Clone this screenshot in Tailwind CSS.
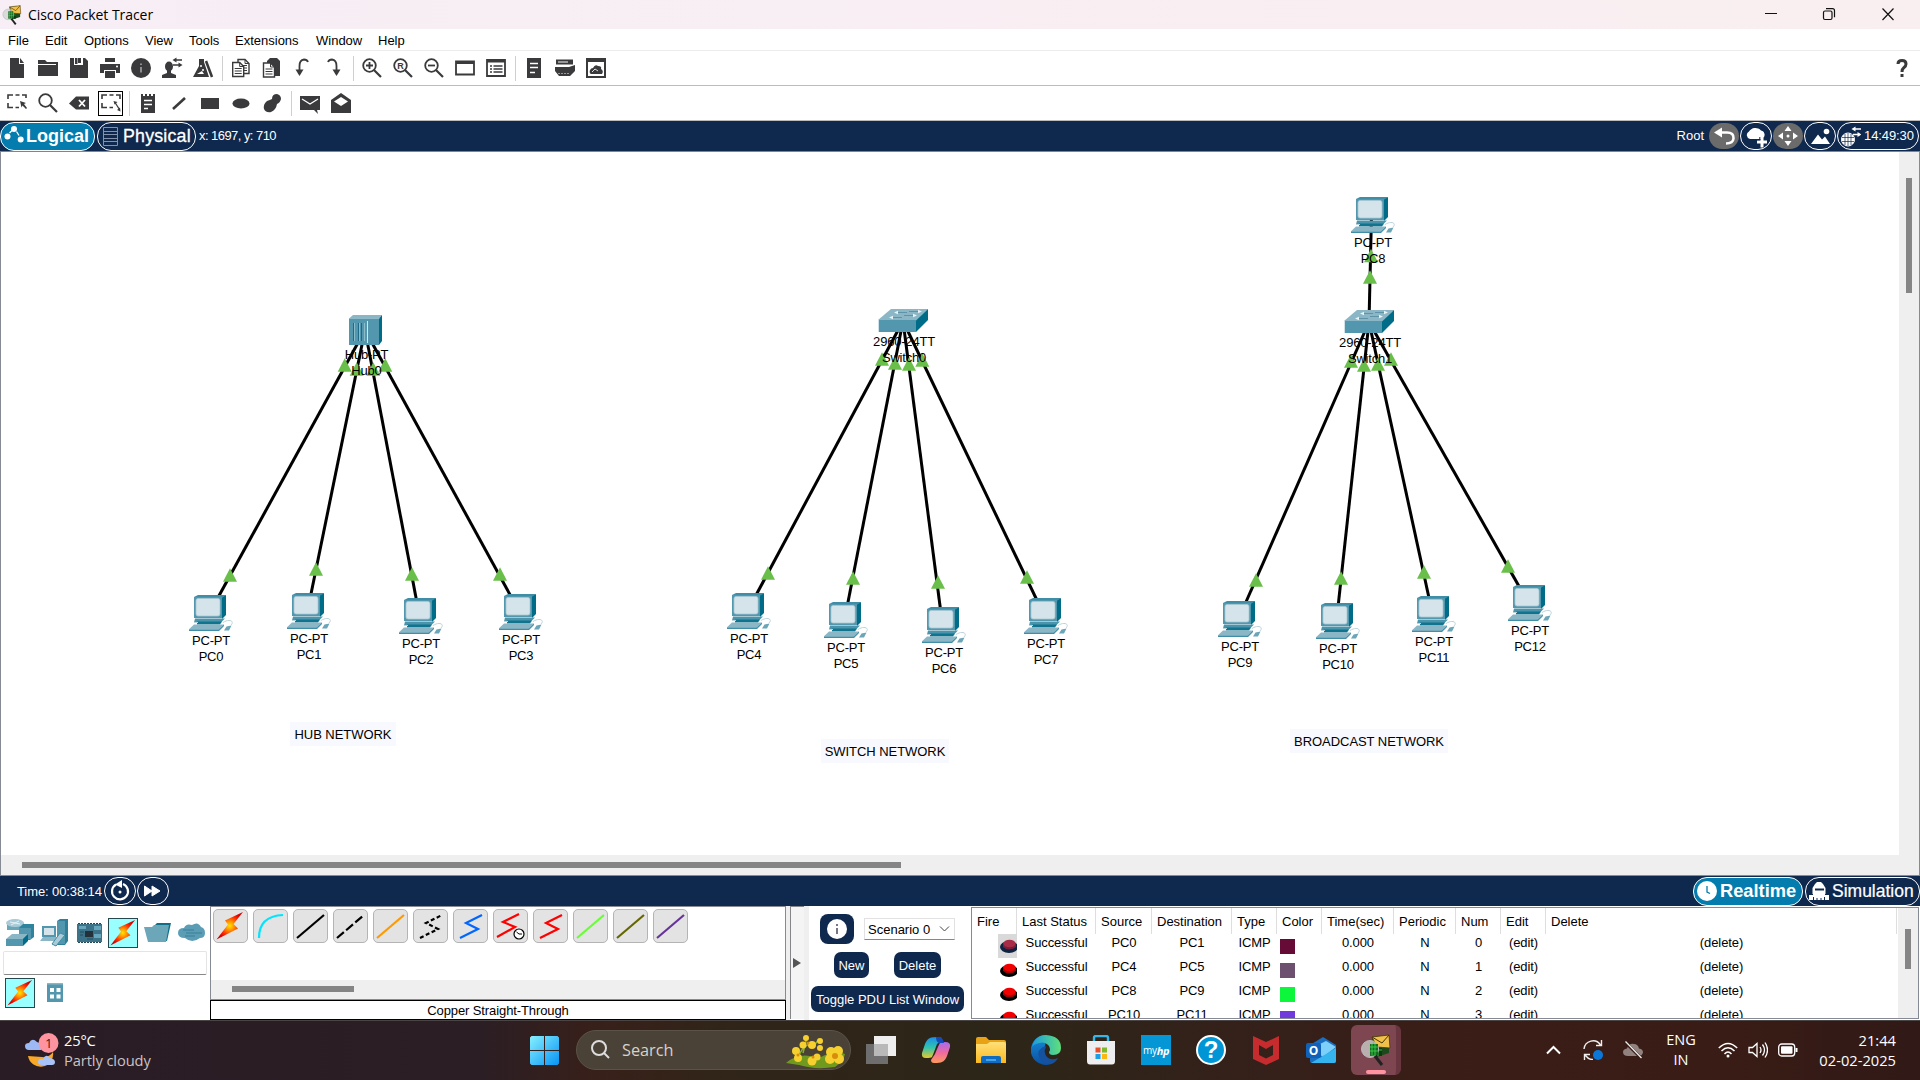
<!DOCTYPE html>
<html lang="en">
<head>
<meta charset="utf-8">
<title>Cisco Packet Tracer</title>
<script src="https://cdn.jsdelivr.net/npm/@tailwindcss/browser@4"></script>
</head>
<body class="w-[1920px] h-[1080px] overflow-hidden bg-white text-black text-[13px] leading-4 font-['Liberation_Sans',Arial,sans-serif] flex flex-col">

<svg class="absolute w-0 h-0">
  <defs>
    <radialGradient id="spark"><stop offset="0" stop-color="#ffe500"/><stop offset=".3" stop-color="#ff9a00"/><stop offset=".7" stop-color="#ff2a00"/><stop offset="1" stop-color="#d80000"/></radialGradient>
    <linearGradient id="win" x1="0" y1="0" x2="1" y2="1"><stop offset="0" stop-color="#86f0ff"/><stop offset="1" stop-color="#0893f5"/></linearGradient>
    <linearGradient id="cpA" x1="0" y1="0" x2="0" y2="1"><stop offset="0" stop-color="#1a8fe8"/><stop offset=".5" stop-color="#2fc3b0"/><stop offset="1" stop-color="#e9c92c"/></linearGradient>
    <linearGradient id="cpB" x1="0" y1="0" x2="0" y2="1"><stop offset="0" stop-color="#a56af0"/><stop offset=".5" stop-color="#ee6aa0"/><stop offset="1" stop-color="#ff9a5a"/></linearGradient>
    <linearGradient id="edA" x1="0" y1="0" x2="1" y2="0"><stop offset="0" stop-color="#1c9bdf"/><stop offset="1" stop-color="#5fe07a"/></linearGradient>
    <linearGradient id="edB" x1="0" y1="0" x2="0" y2="1"><stop offset="0" stop-color="#1590dd"/><stop offset="1" stop-color="#0c4fa0"/></linearGradient>
    <linearGradient id="fold" x1="0" y1="0" x2="0" y2="1"><stop offset="0" stop-color="#ffe07a"/><stop offset="1" stop-color="#fbb91c"/></linearGradient>
    <symbol id="pc" viewBox="0 0 44 36">
      <path d="M5 2 9 0H37L33 3H5Z" fill="#3f8da6"/>
      <path d="M33 2.500 37 0V20L33 24Z" fill="#006c87"/>
      <path d="M5 2H33V23H5Z" fill="#5297ad"/>
      <rect x="7" y="3.500" width="24" height="17.500" rx="2" fill="#d4e4ea" stroke="#a9c6d1" stroke-width=".8"/>
      <path d="M6 23.500H36L32 27.500H5Z" fill="#4b94ab"/><path d="M8 26.500H33L31 29.500H8Z" fill="#10748e"/>
      <path d="M5 27H9V28H5Z" fill="#bcd5dd"/>
      <path d="M5 29.500H35L30 34.500V36H0V34.300Z" fill="#8bb6c6"/><path d="M35 29.500V31L30 36H0V34.800H29.500Z" fill="#3f8da6"/>
      <path d="M37.500 31.500 42.500 30.500 40 35.500H35Z" fill="#6aa5b8"/><path d="M34 27.500C40 23.500 46 26 42 30" stroke="#bcd3dc" fill="none"/>
    </symbol>
    <symbol id="hub" viewBox="0 0 33 30">
      <path d="M0 3.500 4 0H33L30 3.500Z" fill="#8bb6c6"/><path d="M30 3.500 33 0V26L30 30Z" fill="#006c87"/><path d="M0 3.500H30V30H0Z" fill="#5297ad"/>
      <path d="M4.500 8V26M9.500 8V26M12.500 8V26" stroke="#1f6a86"/><path d="M5.500 8V26M10.500 8V26M15.500 8V26" stroke="#9ac3d2" stroke-width=".8"/><path d="M18.500 6V28" stroke="#d4e8ef"/>
    </symbol>
    <symbol id="switch" viewBox="0 0 50 23">
      <path d="M0 11 13 0H50L38 12Z" fill="#8bb6c6"/><path d="M38 11.500 50 0V11L38 23Z" fill="#006c87"/><path d="M0 11H38V23H0Z" fill="#5297ad"/><path d="M.5 11V23" stroke="#cfe2ea"/>
      <path d="M17 3.500H29M12 8.500H24" stroke="#5e93a8"/><path d="M31 2.500H42M26 6.500H37" stroke="#5e93a8"/><path d="m16 3.500 4-1.800v3.600ZM11 8.500l4-1.800v3.600ZM44 2.500l-4-1.800v3.600ZM39 6.500l-4-1.800v3.600Z" fill="#e9f4f8"/>
    </symbol>
    <symbol id="bolt" viewBox="0 0 30 30"><path d="M28 1 10 9.500 13 13.500 1.500 28.500 23 17.500 18.500 13Z" fill="url(#spark)"/></symbol>
    <symbol id="pt" viewBox="0 0 32 32">
      <path d="M12 3 29 1V19L14 24Z" fill="#1d4a1a"/><path d="M13 8H22V22H13Z" fill="#0c3a10"/><path d="M15 8V22M18 8V22M13 12H22M13 16H22" stroke="#2ec23c"/>
      <path d="M12 3 29 1 30 14 17 13Z" fill="#f0c04a" stroke="#4d3500" stroke-width=".8"/><path d="M12 3 22 9 29 1" fill="none" stroke="#4d3500"/>
      <circle cx="10" cy="15" r="8.500" fill="#cfd3cf" fill-opacity=".75" stroke="#b9bdb9"/><path d="M10 10H18V21L10 22Z" fill="#176a22"/><path d="M12 10V21M15 10V21M10 13H18M10 17H18" stroke="#3ddc4e" stroke-width=".8"/>
      <path d="M15 22 22 31" stroke="#222" stroke-width="3"/>
    </symbol>
  </defs>
</svg>

<header class="h-[29px] shrink-0 flex items-center bg-linear-to-r from-[#f7eef6] to-[#f9eff0] pl-[2px] font-['Open_Sans','Noto_Sans',sans-serif]">
  <svg class="w-5 h-6"><use href="#pt" width="20" height="24"/></svg>
  <span class="ml-1.5 text-[14px] tracking-[-0.05px] grow">Cisco Packet Tracer</span>
  <svg class="w-[156px] h-[29px]" viewBox="1764 0 156 29" fill="none" stroke="#111" stroke-width="1.200"><path d="M1765 13.500h12M1882.500 8.500l11 11.500M1893.500 8.500l-11 11.500"/><rect x="1823.500" y="11" width="8.500" height="8.500" rx="1.500"/><path d="M1826 8.700h6.500q2 0 2 2v6.500"/></svg>
</header>

<nav class="h-[22px] shrink-0 border-b border-[#ececec] flex items-center pt-[3px]" id="menu"></nav>

<div class="h-[35px] shrink-0 border-b border-[#bcbcbc] flex items-center pl-[7px] pr-[11px]" id="bar1"></div>
<div class="h-[35px] shrink-0 border-b border-[#bcbcbc] flex items-center pl-[7px]" id="bar2"></div>

<div class="h-[31px] shrink-0 bg-[#0f284d] border-b border-[#7f8590] flex items-center text-white">
  <div class="w-[95px] h-[29px] rounded-[14px] border border-white bg-[#047cad] flex items-center pl-[3px]">
    <svg class="w-5 h-5" fill="#fff"><path d="M5.500 7 8 4.500M12.500 5.500 15 9.500" fill="none" stroke="#fff" stroke-width="1.300"/><circle cx="3.500" cy="10.500" r="3"/><circle cx="10" cy="3" r="3"/><circle cx="16.700" cy="13.500" r="3"/></svg>
    <span class="ml-[2px] text-lg font-bold">Logical</span>
  </div>
  <div class="ml-[2px] w-[99px] h-[29px] rounded-[14px] border border-white flex items-center pl-[5px]">
    <svg class="w-[15px] h-[19px]" fill="none" stroke="#8391aa"><path d="M.5.500h14v18H.500ZM.500 4.500h14M.500 7.500h14M.500 11.500h14M.500 14.500h14"/></svg>
    <span class="ml-[5px] text-[17.800px] tracking-[0.2px] [-webkit-text-stroke:0.3px_white]">Physical</span>
  </div>
  <span class="ml-[3px] grow tracking-[-0.55px]">x: 1697, y: 710</span>
  <span class="mr-[5px]">Root</span>
  <svg class="w-[30px] h-[26px] rounded-[13px] bg-[#6b6b6b]" viewBox="0 0 30 26"><path d="M5 9.500 13 4.500V14.500Z" fill="#fff"/><path d="M12 9.500H18Q25 9.500 24.500 15.500 24 20.500 17 20.500" fill="none" stroke="#fff" stroke-width="2.600"/></svg>
  <svg class="ml-[1px] w-[32px] h-7 rounded-[14px] border border-white" viewBox="0 0 30 26" fill="#fff"><path d="M9 16a4 4 0 0 1-1-7.500 7 6 0 0 1 12-1 4.500 4.500 0 0 1 1 8.500ZM19.500 14.500h3v3h3.500v3h-3.500v4h-3v-4h-3.500v-3h3.500Z"/><path d="M18.800 14v2.800h-3.500" fill="none" stroke="#0f284d"/></svg>
  <svg class="ml-[1px] w-[30px] h-[26px] rounded-[13px] bg-[#6b6b6b]" viewBox="0 0 30 26" fill="#fff"><path d="M15 3l3.500 5h-7ZM15 23l3.500-5h-7ZM5 13l5-3.500v7ZM25 13l-5-3.500v7Z"/><circle cx="15" cy="13" r="1.500"/></svg>
  <svg class="ml-[1px] w-[32px] h-7 rounded-[14px] border border-white" viewBox="0 0 30 26" fill="#fff"><path d="M6 21l7-9.500 4 5 3-3 5 7.500Z"/><circle cx="21.500" cy="8.500" r="2.800"/></svg>
  <div class="ml-[1px] mr-[1px] w-[82px] h-7 rounded-[14px] border border-white flex items-center pl-[3px]">
    <svg class="w-[20px] h-[22px]" fill="none" stroke="#fff"><circle cx="7" cy="14.500" r="6.500" fill="#fff"/><path d="M1 12.500h12M1 16.500h12M7 8v13M4 9v11M10 9v11" stroke="#0f284d" stroke-width=".7"/><path d="M12 4h8M12 9.500h7" stroke-width="1.700"/><path d="m10.500 4 4-2.500v5ZM20.500 9.500l-4-2.500v5Z" fill="#fff" stroke="none"/></svg>
    <span class="ml-[3px] tracking-[-0.1px]">14:49:30</span>
  </div>
</div>

<main class="h-[724px] shrink-0 flex flex-col border-l border-b border-r border-[#858a94]">
  <div class="h-[703px] flex">
    <div class="relative w-[1898px] h-[703px] overflow-hidden" id="canvas"></div>
    <div class="grow bg-[#efefef] pl-[7px] pt-[26px]"><div class="w-[6px] h-[115px] bg-[#858585]"></div></div>
  </div>
  <div class="grow bg-[#efefef] pl-[21px] pt-[7px]"><div class="w-[879px] h-[6px] bg-[#858585]"></div></div>
</main>

<div class="h-[30px] shrink-0 bg-[#0f284d] flex items-center text-white">
  <span class="ml-[17px] w-[87px] pt-px whitespace-nowrap tracking-[-0.1px]">Time: 00:38:14</span>
  <svg class="w-8 h-7 rounded-[14px] border border-white" viewBox="0 0 30 26"><path d="M11 6.500A8 8 0 1 0 18 6" fill="none" stroke="#fff" stroke-width="2.200"/><path d="M10 6.500 17 2v8Z" fill="#fff"/><circle cx="15" cy="14" r="1.500" fill="#fff"/></svg>
  <svg class="ml-px w-8 h-7 rounded-[14px] border border-white" viewBox="0 0 30 26" fill="#fff"><path d="M6.500 8 14 13 6.500 18ZM14 8 22 13 14 18Z" stroke="#fff"/></svg>
  <div class="grow"></div>
  <div class="w-[110px] h-[29px] rounded-[14px] border border-white bg-[#047cad] flex items-center pl-[3px]">
    <svg class="w-5 h-5"><circle cx="10" cy="10" r="10" fill="#fff"/><path d="M10 5v6l3 1.500" fill="none" stroke="#047cad" stroke-width="1.300"/></svg>
    <span class="ml-[3px] text-[18.300px] font-bold">Realtime</span>
  </div>
  <div class="ml-[2px] w-[115px] h-[29px] rounded-[14px] border border-white flex items-center pl-[3px]">
    <svg class="w-5 h-5" fill="#fff"><path d="M6 3 8 1h4l2 2 2.500 4v6H3.500V7ZM0 14h4v-2h12v2h4v5H0Z"/><path d="M6 8.500h9" stroke="#0f284d" stroke-width="2"/><path d="M4.500 16v3M8 17v2M12 17v2M15.500 16v3" stroke="#0f284d"/></svg>
    <span class="ml-[3px] text-[17.500px] [-webkit-text-stroke:0.2px_white]">Simulation</span>
  </div>
</div>

<section class="h-[114px] shrink-0 flex">
  <div class="w-[210px] flex flex-col">
    <div class="h-[45px] pl-[5px] pt-3 flex items-start gap-[5px]">
      <svg class="w-[30px] h-[30px]"><path d="M2 5Q9-2 19 5V12H2Z" fill="#6aa5b8"/><ellipse cx="10" cy="5" rx="9" ry="4" fill="#a9cbd7"/><path d="M14 10 18 6H29V19L25 22H14Z" fill="#2f849d"/><path d="M14 10H26V21H14Z" fill="#5297ad"/><path d="M1 21 7 16H23L18 21Z" fill="#8bb6c6"/><path d="M1 21H18V28H1Z" fill="#5297ad"/><path d="M18 21 23 16V23L18 28Z" fill="#006c87"/><path d="M5 4 15 6M6 7 14 3" stroke="#e6f2f6"/></svg>
      <svg class="w-[30px] h-[30px]"><path d="M17 3 20 1H28V23L25 27H17Z" fill="#2f7f99"/><path d="M17 3H25V26H17Z" fill="#5297ad"/><path d="M2 8H16V19H2Z" fill="#5297ad"/><path d="M4 10H14V17H4Z" fill="#d4e4ea"/><path d="M3 19H17L14 23H0Z" fill="#8bb6c6"/><path d="M12 26 20 15 25 17 16 28Z" fill="#a9cbd7" stroke="#3f8da6"/></svg>
      <svg class="w-[30px] h-[30px]"><path d="M2 6H27V24H2Z" fill="#3d7389"/><path d="M10 13H18V19H10Z" fill="#23323a"/><path d="M4 8H11V11H4ZM19 8H26V12H19ZM19 16H26V20H19Z" fill="#65a6bd"/><path d="M3 5.500H27M3 24.500H27" stroke="#20495a" stroke-dasharray="2 1"/><path d="M5 14H9M5 17H8M12 21H18" stroke="#1f4f63"/></svg>
      <div class="w-[30px] h-[30px] -ml-[2px] bg-[#99ffff] border border-[#24484d]"><svg class="w-7 h-7"><use href="#bolt"/></svg></div>
      <svg class="w-[30px] h-[30px]"><path d="M12 7 14 5H28L24 23H8Z" fill="#0f6f88"/><path d="M1 9H9L11 7H26L23 24H5Z" fill="#6ba6b9"/></svg>
      <svg class="w-[30px] h-[30px] -ml-px"><path d="M8 20Q1 20 1 15 1 10 7 10 9 5 15 7 21 3 24 9 28 10 28 15 28 20 23 20 15 26 8 20Z" fill="#5b9db4"/><path d="M6 12H17M9 15H25M8 18H18" stroke="#3b7f97"/></svg>
    </div>
    <div class="ml-[3px] w-[204px] h-[24px] border border-[#e4e4e4] border-b-[#888] rounded-[2px]"></div>
    <div class="mt-[3px] pl-[5px] flex items-center gap-3">
      <div class="w-[30px] h-[30px] bg-[#99ffff] border border-[#24484d]"><svg class="w-7 h-7"><use href="#bolt"/></svg></div>
      <svg class="w-4 h-5"><path d="M0 1H16V19H0Z" fill="#5297ad"/><path d="M0 0H16V1.500H0Z" fill="#8bb6c6"/><path d="M3 5H7V9H3ZM9.500 5H13.500V9H9.500ZM3 11.500H7V15.500H3ZM9.500 11.500H13.500V15.500H9.500Z" fill="#fff"/></svg>
    </div>
  </div>
  <div class="w-[576px] flex flex-col">
    <div class="h-[94px] border border-[#858a94] flex flex-col">
      <div class="h-[73px] pl-[2px] pt-[2px] flex gap-[5px]" id="cables"></div>
      <div class="grow bg-[#efefef] pl-[21px] pt-[6px]"><div class="w-[122px] h-[6px] bg-[#858585]"></div></div>
    </div>
    <div class="grow border border-black flex items-center justify-center pt-px tracking-[-0.1px]">Copper Straight-Through</div>
  </div>
  <div class="w-[4px] bg-[#efefef]"></div>
  <div class="w-[14px] h-[113px] bg-[#f4f4f4] border-l border-t border-[#85858a] flex items-center"><svg class="ml-[2px] w-[9px] h-3"><path d="M0 1 8 6 0 11Z" fill="#555"/></svg></div>
  <div class="w-[5px] bg-[#efefef]"></div>
  <div class="w-[162px] pl-[2px] pt-2">
    <div class="flex items-center pl-[9px]">
      <div class="w-[34px] h-[30px] rounded-lg bg-[#0f284d] flex items-center justify-center"><svg class="w-5 h-5"><circle cx="10" cy="10" r="10" fill="#fff"/><path d="M10 5v2M10 9v6" stroke="#556" stroke-width="1.600"/></svg></div>
      <div class="ml-[10px] w-[91px] h-[22px] border border-[#e2e2e2] border-b-[#888] flex items-center pl-[3px]"><span class="w-[71px] pt-px">Scenario 0</span><svg class="w-[11px] h-2"><path d="M1 1.500 5.500 6 10 1.500" fill="none" stroke="#444"/></svg></div>
    </div>
    <div class="mt-2 ml-[23px] flex gap-[25px] text-white">
      <div class="w-[35px] h-[26px] rounded-[7px] bg-[#0f284d] flex items-center justify-center pt-px">New</div>
      <div class="w-[47px] h-[26px] rounded-[7px] bg-[#0f284d] flex items-center justify-center pt-px">Delete</div>
    </div>
    <div class="mt-2 w-[153px] h-[26px] rounded-[7px] bg-[#0f284d] text-white flex items-center justify-center pt-px whitespace-nowrap">Toggle PDU List Window</div>
  </div>
  <div class="mt-px w-[948px] h-[112px] border border-[#858a94] flex overflow-hidden">
    <div class="w-[926px]">
      <div class="h-[26px] grid grid-cols-[45px_79px_56px_80px_45px_45px_72px_62px_45px_45px_351px]" id="thead"></div>
      <div id="rows"></div>
    </div>
    <div class="grow bg-[#efefef] pl-[7px] pt-[21px]"><div class="w-[6px] h-10 bg-[#858585]"></div></div>
  </div>
</section>

<footer class="h-[60px] shrink-0 border-t border-[#4b4444] pb-px bg-[linear-gradient(90deg,#291c25_0%,#2b1e24_25%,#38201a_31%,#302518_38%,#2c2618_52%,#35201a_66%,#3a1d16_78%,#391c15_90%,#301917_100%)] text-white flex items-center font-['Open_Sans','Noto_Sans',sans-serif]">
  <div class="w-[530px] shrink-0 pl-6 pb-px flex items-center">
    <svg class="w-10 h-9"><path d="M4 18a10 10 0 0 0 25-4q-4 6-11 5Z" fill="#f8a826" transform="translate(0 6)"/><path d="M5 18Q1 18 1 14 1 11 5 11 8 5 13 10 18 11 17 18Z" fill="#9db9f5"/><path d="M18 33Q13 33 14 29 15 26 19 27 22 21 26 26 31 27 31 30 31 33 28 33Z" fill="#a9c2f8"/><circle cx="24.500" cy="11" r="10" fill="#ff939f"/><text x="21" y="16" font-size="13" fill="#3a1a20">1</text></svg>
    <div class="text-[14.700px] leading-5"><div class="tracking-[-0.2px]">25°C</div><div class="text-[#c9c2c6] tracking-[-0.1px]">Partly cloudy</div></div>
  </div>
  <svg class="w-[29px] h-[29px] shrink-0" viewBox="0 0 29 29"><path d="M0 1.500 1.500 0H14V14H0ZM15 0H27.500L29 1.500V14H15ZM0 15H14V29H1.500L0 27.500ZM15 15H29V27.500L27.500 29H15Z" fill="url(#win)"/></svg>
  <div class="ml-[17px] w-[275px] h-10 shrink-0 rounded-full bg-[#4a4137] border border-[#5b5348] flex items-center pl-[14px] pr-[3px]">
    <svg class="w-5 h-5" fill="none" stroke="#ddd" stroke-width="2"><circle cx="8" cy="8" r="7"/><path d="m13 13 5 5"/></svg>
    <span class="ml-[11px] text-[16.300px] text-[#d6d2cc]">Search</span>
    <svg class="ml-auto w-[62px] h-[38px]" viewBox="0 0 62 38"><path d="M1 32Q14 20 34 27 50 18 60 23 59 30 50 36 30 39 14 34Z" fill="#6f9a1e"/><path d="M12 30Q18 10 30 14M18 22 22 6M28 16 34 8" stroke="#87b02a" fill="none" stroke-width="1.500"/><g fill="#f6d02f"><circle cx="11" cy="20" r="4"/><circle cx="18" cy="14" r="3.500"/><circle cx="21" cy="7" r="3"/><circle cx="27" cy="14" r="4"/><circle cx="35" cy="10" r="3"/><circle cx="35" cy="17" r="3"/><circle cx="13" cy="27" r="4"/><circle cx="27" cy="30" r="4.500"/><circle cx="32" cy="26" r="3.500"/><circle cx="46" cy="21" r="5"/><circle cx="53" cy="20" r="5"/><circle cx="45" cy="28" r="5"/><circle cx="54" cy="28" r="5"/></g><g fill="#d88c0c"><circle cx="50" cy="25" r="3"/><circle cx="13" cy="24" r="1.500"/><circle cx="28" cy="26" r="1.500"/><circle cx="23" cy="12" r="1.500"/></g></svg>
  </div>
  <div class="ml-[15px] shrink-0 flex items-center gap-[25px]">
    <svg class="w-[30px] h-[30px]"><path d="M0 9H22V29H0Z" fill="#6e6e6e"/><path d="M8 1H30V21H8Z" fill="#eee"/><path d="M8 9H22V21H8Z" fill="#b9b9b9"/></svg>
    <svg class="w-[30px] h-[30px]"><path d="M9 3Q11 2 18 2 21 2 21 5L16 9Q12 20 11 22 10 23 5 23 0 23 1 18L4 9Q6 4 9 3Z" fill="url(#cpA)"/><path d="M21 27Q19 28 13 28 10 28 10 25L14 19Q18 9 19 8 20 7 24 7 30 7 29 12L26 21Q24 26 21 27Z" fill="url(#cpB)"/><path d="M15 2H19Q22 3 23 8H18Q15 7 15 2Z" fill="#1649b8"/></svg>
    <svg class="w-[30px] h-[30px]"><path d="M0 4Q0 2 2 2H10L13 5H28Q30 5 30 7V12H0Z" fill="#e7a315"/><path d="M0 9H11L14 7H28Q30 7 30 9V28H0Z" fill="url(#fold)"/><path d="M5 28V23Q5 21 7 21H23Q25 21 25 23V28Z" fill="#0f6cc0"/><path d="M10 25H20" stroke="#5bb6f5" stroke-width="1.500"/></svg>
    <svg class="w-[30px] h-[30px]" viewBox="0 0 30 30"><path d="M15 0A15 15 0 1 0 25 26Q13 30 11 20 10 15 14 12Z" fill="url(#edB)"/><path d="M1 12Q4 0 15 0 30 1 30 13 30 20 22 20 18 20 18 17 20 15 18 11 14 6 8 8 3 9 1 12Z" fill="url(#edA)"/><path d="M14 11Q5 15 8 22 12 30 20 29 25 27 27 23 20 26 16 22 12 17 15 12Z" fill="#14519f"/></svg>
    <svg class="w-[30px] h-[30px]"><path d="M8 7V2.500Q8 1 10 1H20Q22 1 22 2.500V7" fill="none" stroke="#36b5e8" stroke-width="2.400"/><path d="M1 6H29V26Q29 29.500 26 29.500H4Q1 29.500 1 26Z" fill="#eeeef0"/><path d="M9.500 12.500H14.500V17.500H9.500Z" fill="#e8502a"/><path d="M16 12.500H21V17.500H16Z" fill="#7db928"/><path d="M9.500 19H14.500V24H9.500Z" fill="#1ba0e8"/><path d="M16 19H21V24H16Z" fill="#fbb813"/></svg>
    <div class="w-[30px] h-[30px] bg-[#0596d6] flex items-center justify-center text-[10px] leading-none tracking-[-0.3px]">my<b class="italic text-[11px] tracking-[-0.5px]">hp</b></div>
    <div class="w-[30px] h-[30px] rounded-full bg-[#0096d6] border-2 border-white flex items-center justify-center text-[24px] leading-none font-bold font-['Liberation_Sans',Arial,sans-serif]">?</div>
    <svg class="w-[30px] h-[30px]"><path d="M2 1 15 7 28 1V24L15 30 2 24ZM8 10V20L15 23.500 22 20V10L15 14Z" fill="#c62c2e" fill-rule="evenodd"/></svg>
    <svg class="w-[30px] h-[30px]"><path d="M4 10 17 2 30 10V26Q30 28 28 28H6Q4 28 4 26Z" fill="#1b6fc0"/><path d="M6 13 20 6 30 12 17 22Z" fill="#7cd0fa"/><path d="M5 28 30 13V26Q30 28 28 28Z" fill="#35b4ee"/><rect x="0" y="8" width="15" height="15" rx="2" fill="#0f62b8"/><text x="7.500" y="20" text-anchor="middle" font-size="12" font-weight="700" fill="#fff">O</text></svg>
  </div>
  <div class="ml-[15px] w-[50px] h-[50px] shrink-0 rounded-md bg-[#7d4650] border-r-[5px] border-[#69363f] relative flex items-center justify-center">
    <svg class="w-8 h-8 ml-1"><use href="#pt"/></svg><div class="absolute bottom-[1px] left-[15px] w-5 h-1 rounded-full bg-[#ff93a0]"></div>
  </div>
  <svg class="ml-[145px] w-[15px] h-3 shrink-0" fill="none" stroke="#fff" stroke-width="2"><path d="m1 9.500 6.500-6.500 6.500 6.500"/></svg>
  <svg class="ml-[22px] w-5 h-5 shrink-0" fill="none" stroke="#eee" stroke-width="1.400"><path d="M1 9A9 9 0 0 1 17.500 5M18.500 0V5.500H13M1.500 20V14.500H7M2 15q4 5 8 4.500"/><circle cx="15" cy="15" r="5" fill="#0b78d8" stroke="none"/></svg>
  <svg class="ml-5 w-5 h-5 shrink-0"><path d="M5 16Q0 16 0 12 0 9 4 8.500 6 3 11 4 15 4 16 8.500 20 9 20 12.500 19 16 16 16Z" fill="#91827f"/><path d="m2 2 16 16" stroke="#391c15" stroke-width="3"/><path d="m2.500 1.500 16 16.500" stroke="#eee" stroke-width="1.300"/></svg>
  <div class="ml-4 w-11 shrink-0 pb-px text-center text-[14.500px] leading-5"><div>ENG</div><div>IN</div></div>
  <svg class="ml-[15px] w-5 h-5 shrink-0" fill="none" stroke="#fff" stroke-width="1.500"><path d="M.8 8Q10-1 19.200 8M3.500 11Q10 4.500 16.500 11M6.500 14Q10 10 13.500 14"/><circle cx="10" cy="16" r="1.500" fill="#fff" stroke="none"/></svg>
  <svg class="ml-[10px] w-5 h-5 shrink-0" fill="none" stroke="#fff" stroke-width="1.300"><path d="M1 7.500H4.500L9 3.500V16.500L4.500 12.500H1ZM12 7q2 3 0 6M14.500 4.500q4 5.500 0 11M17 2.500q5 7.500 0 15"/></svg>
  <svg class="ml-[10px] w-5 h-5 shrink-0"><rect x=".7" y="4" width="16" height="12" rx="3" fill="none" stroke="#fff" stroke-width="1.300"/><rect x="3" y="6.200" width="11.500" height="7.600" rx="1" fill="#fff"/><path d="M18.500 8v4" stroke="#fff" stroke-width="2"/></svg>
  <div class="ml-[10px] w-[88px] shrink-0 pb-px text-right text-[14.700px] leading-5 whitespace-nowrap"><div>21:44</div><div>02-02-2025</div></div>
</footer>

<script>
const $ = id => document.getElementById(id);

$('menu').innerHTML = [['File',8],['Edit',45],['Options',84],['View',145],['Tools',189],['Extensions',235],['Window',316],['Help',378]]
  .map(([t, x], i, a) => `<span class="whitespace-nowrap" style="width:${(a[i + 1] ? a[i + 1][1] : 420) - x}px;${i ? '' : 'margin-left:8px'}">${t}</span>`).join('');

const D = '#3a3a3c';
const mag = (c) => `<circle cx="7.500" cy="7.500" r="6.300" fill="none" stroke="${D}" stroke-width="1.800"/><path d="m12 12 7 7" stroke="${D}" stroke-width="2.200"/>${c}`;
const page = (x, y) => `<path d="M${x} ${y}h7l4 4v10h-11Z" fill="#fff" stroke="${D}" stroke-width="1.400"/><path d="M${x + 7} ${y}v4h4M${x + 2} ${y + 6}h7M${x + 2} ${y + 8.5}h7M${x + 2} ${y + 11}h7" fill="none" stroke="${D}"/>`;
const I = {
  new: `<path d="M3 0h9v6h5v14H3Z" /><path d="M13 0l4 5h-4Z"/>`,
  open: `<path d="M0 2h7l2 2h11v14H0Z"/><path d="M0 6.500h18" stroke="#fff"/>`,
  save: `<path d="M1 0h15l3 3v17H1Z"/><path d="M5 0v7h9V0h-2v5H9V0Z" fill="#fff"/><path d="M6 0h2.500v6H6Z"/>`,
  print: `<path d="M5 0h10v4H5ZM0 6h20v9h-4v-3H4v3H0Z"/><path d="M5 13h10v7H5Z"/><circle cx="17" cy="8.500" r="1" fill="#fff"/>`,
  info: `<circle cx="10" cy="10" r="10"/><path d="M10 5.500v1.500M10 9v5.500" stroke="#aaa" stroke-width="1.500"/>`,
  user: `<ellipse cx="7" cy="8.500" rx="4" ry="5"/><path d="M5 12h4v3l5 2v3H0v-3l5-2Z"/><path d="M12 2h8M11 7h8" stroke="${D}" stroke-width="1.500"/><path d="m10.500 2 4-2.500v5ZM20.500 7l-4-2.500v5Z"/>`,
  tri: `<path d="M6 1h5v3l5 15H0L6 8Z"/><path d="M13 3l6 16" stroke="${D}" stroke-width="2.500"/><circle cx="8" cy="8" r="1" fill="#fff"/><circle cx="10" cy="12" r="1" fill="#fff"/><path d="m4 16 5-3 2 3Z" fill="#fff"/>`,
  copy: page(7, 1.5) + page(1.7, 4.5),
  paste: `<path d="M5 3l3-3h7l3 3v15H5Z"/>` + page(1.5, 5),
  undo: `<path d="M15 4Q14 1.500 11 1.500 6.500 2 6.500 8v8" fill="none" stroke="${D}" stroke-width="1.800"/><path d="M2.500 11.500h8L6.500 18Z"/>`,
  redo: `<path d="M4 4Q5 1.500 8 1.500 12.500 2 12.500 8v8" fill="none" stroke="${D}" stroke-width="1.800"/><path d="M8.500 11.500h8L12.500 18Z"/>`,
  zin: mag(`<path d="M4 7.500h7M7.500 4v7" stroke="${D}" stroke-width="1.800"/>`),
  zr: mag(`<text x="7.500" y="10.700" text-anchor="middle" font-size="9" font-weight="700">R</text>`),
  zout: mag(`<path d="M4 7.500h7" stroke="${D}" stroke-width="1.800"/>`),
  find: mag(''),
  rect: `<path d="M1 3.500h18v13H1Z" fill="none" stroke="${D}" stroke-width="1.800"/><path d="M1 5h18" stroke="${D}" stroke-width="2"/>`,
  list: `<path d="M1 2h18v16H1Z" fill="none" stroke="${D}" stroke-width="1.800"/><path d="M1 3h18" stroke="${D}" stroke-width="3"/><path d="M4 8h2M4 11h2M4 14h2M7.500 8h9M7.500 11h9M7.500 14h9" stroke="${D}" stroke-width="1.400"/>`,
  server: `<path d="M3 0h14v20H3Z"/><path d="M6 5.500h8M6 9.500h8M6 14.500h5" stroke="#fff" stroke-width="1.400"/>`,
  rack: `<path d="M1 1.500h17v5H1Z"/><path d="M3 4h10" stroke="#ccc" stroke-width="1.300"/><path d="M0 9h14l6-2v6l-5 5H4l-4-5Z"/><path d="M3 15.500h11" stroke="#999" stroke-dasharray="2 1"/>`,
  cloud: `<path d="M1 1h18v18H1Z" fill="none" stroke="${D}" stroke-width="2"/><path d="M1 3h18" stroke="${D}" stroke-width="2"/><path d="M5 16q-2-1-1-4 1-2 3-2 2-4 5-2 4 0 3 3 3 2 1 5Z"/><path d="m6 14 3-3 3 2" fill="none" stroke="#ddd"/>`,
  sel: `<path d="M1 6V2H6M8.500 2h4M15 2h4v3M1 10v4.500H6M8.500 14.500H12" fill="none" stroke="${D}" stroke-width="1.600"/><path d="m13 8 6 2-2 1 3 4-1 1-3.500-3.500-1 2Z"/>`,
  selbox: `<path d="M1 6V2H6M8.500 2h4M15 2h4v4M1 10v4.500H6M8.500 14.500H12" fill="none" stroke="${D}" stroke-width="1.600"/><path d="m14 9.500 4.500 7" stroke="${D}" stroke-width="1.300"/><path d="m12.500 8 4 1-3 2.500ZM19.500 18.500l-.5-4-3 2.500Z"/>`,
  del: `<path d="M0 10.500 7 3.500h13v13H7Z"/><path d="m10 7 6 6.500M16 7l-6 6.500" stroke="#fff" stroke-width="1.800"/>`,
  note: `<path d="M3 1h2v2h2V1h2v2h2V1h2v2h2V1h2v19H3Z"/><path d="M6 7.500h8M6 11.500h8M6 15.500h4" stroke="#fff" stroke-width="1.400"/>`,
  line: `<path d="M4 16 16 5" stroke="${D}" stroke-width="2.600"/>`,
  frect: `<path d="M1 5h18v11H1Z"/>`,
  ell: `<ellipse cx="10" cy="10.500" rx="8.500" ry="5"/>`,
  free: `<path d="M10 6Q10 1 15 1q4 1 4 5-1 4-4 5-1 6-6 8-5 1-7-3-1-5 3-8 3-1 5-2Z"/>`,
  mail: `<path d="M0 3h20v14h-3l1 4-4-4H0Z"/><path d="m2 6 8 5 8-5" fill="none" stroke="#fff" stroke-width="1.300"/>`,
  omail: `<path d="M0 7 10 0l10 7v13H0Z"/><path d="M3 8.500 10 4l7 4.500-7 4.500Z" fill="#fff"/>`
};
const icon = k => k === '|' ? `<div class="w-px h-[25px] bg-[#cfcfcf] -ml-[2px] -mr-[3px]"></div>`
  : k === 'selbox' ? `<div class="w-[25px] h-[25px] -ml-[2px] -mr-[3px] border border-black flex items-center justify-center"><svg class="w-5 h-5" viewBox="0 0 20 20" fill="${D}">${I[k]}</svg></div>`
  : `<svg class="w-5 h-5 overflow-visible shrink-0" viewBox="0 0 20 20" fill="${D}">${I[k]}</svg>`;
const bar = s => `<div class="flex items-center gap-[11px]">${s.split(' ').map(icon).join('')}</div>`;
$('bar1').innerHTML = bar('new open save print info user tri | copy paste undo redo | zin zr zout rect list | server rack cloud')
  + `<svg class="ml-auto w-[14px] h-5" fill="none" stroke="${D}" stroke-width="3"><path d="M3 6Q3 2.500 7 2.500T11 6Q11 8 9 9.500 7 11 7 14"/><path d="M7 16v3"/></svg>`;
$('bar2').innerHTML = bar('sel find del selbox | note line frect ell free | mail omail');

// Topology; coordinates are window pixels, shifted to the canvas origin
const OX = 1, OY = 152;
const hubs = [
  { k: 'hub', x: 349, y: 315, w: 33, h: 30, cx: 365, cy: 330, lx: 366.5, ly: 359, t: ['Hub-PT', 'Hub0'], pcs: [[189,595,'PC0'],[287,593,'PC1'],[399,598,'PC2'],[499,594,'PC3']] },
  { k: 'switch', x: 878, y: 309, w: 50, h: 23, cx: 903, cy: 321, lx: 904, ly: 346, t: ['2960-24TT', 'Switch0'], pcs: [[727,593,'PC4'],[824,602,'PC5'],[922,607,'PC6'],[1024,598,'PC7']] },
  { k: 'switch', x: 1344, y: 310, w: 50, h: 23, cx: 1369, cy: 322, lx: 1370, ly: 347, t: ['2960-24TT', 'Switch1'], pcs: [[1218,601,'PC9'],[1316,603,'PC10'],[1412,596,'PC11'],[1508,585,'PC12'],[1351,197,'PC8']] }
];
const lights = [[230,581.7],[316,575.7],[412,580.7],[500,580.7],[344.7,371.7],[356.7,375.7],[373.3,375.7],[385.3,371.7],
  [768,579.7],[853,584.7],[938,588.7],[1027,583.7],[882,365.7],[895,369.7],[909,370.7],[922.3,366.7],
  [1256,586.7],[1341,584.7],[1424,578.7],[1508,572.7],[1351,367.7],[1364,371.7],[1378,370.7],[1391,365.7],[1371,262.3],[1370,283.7]];
let lines = '', icons = '', labels = '';
const label = (cx, base, t) => `<div class="absolute -translate-x-1/2 text-center leading-4 tracking-[-0.2px] whitespace-nowrap" style="left:${cx - OX}px;top:${Math.round(base - 12 - OY)}px">${t.join('<br>')}</div>`;
for (const h of hubs) {
  for (const [x, y, n] of h.pcs) {
    lines += `<path d="M${h.cx} ${h.cy}L${x + 20.5} ${y + 18}"/>`;
    icons += `<use href="#pc" x="${x}" y="${y}" width="44" height="36"/>`;
    labels += label(x + 22, y + 49.5, ['PC-PT', n]);
  }
  icons += `<use href="#${h.k}" x="${h.x}" y="${h.y}" width="${h.w}" height="${h.h}"/>`;
  labels += label(h.lx, h.ly, h.t);
}
const notes = [[290,722,106,'HUB NETWORK'],[821,739,128,'SWITCH NETWORK'],[1290,729,158,'BROADCAST NETWORK']]
  .map(([x, y, w, t]) => `<div class="absolute h-6 bg-[#f8f8ff] flex items-center justify-center pt-px tracking-[-0.05px] whitespace-nowrap" style="left:${x - OX}px;top:${y - OY}px;width:${w}px">${t}</div>`).join('');
$('canvas').innerHTML = `<svg class="w-[1898px] h-[703px]" viewBox="${OX} ${OY} 1898 703"><g stroke="#000" stroke-width="3">${lines}</g>`
  + lights.map(([x, y]) => `<path d="M${x} ${y - 13.5}l7 13.500h-14Z" fill="#6abf4b"/>`).join('') + icons + `</svg>` + labels + notes;

const zig = 'M6 28 24 19 12 13 28 5';
const cables = [
  `<use href="#bolt" x="1" y="1" width="30" height="30"/>`,
  `<path d="M5 28Q5 6 29 5" stroke="#00e5ff"/>`,
  `<path d="M3 28 30 5" stroke="#000"/>`,
  `<path d="M3 28 30 5" stroke="#000" stroke-dasharray="9 3"/>`,
  `<path d="M3 28 30 5" stroke="#ff9900"/>`,
  `<path d="${zig}" stroke="#000" stroke-dasharray="4 2.500"/>`,
  `<path d="${zig}" stroke="#0066ff"/>`,
  `<path d="M3 27 21 17 9 12 25 4" stroke="#f00"/><circle cx="25" cy="24" r="5" fill="#fff" stroke="#000" stroke-width="1.200"/><path d="M25 24l-2.500-2M25 24h3" stroke="#000" stroke-width="1"/>`,
  `<path d="${zig}" stroke="#f00"/>`,
  `<path d="M3 28 30 5" stroke="#66ff33"/>`,
  `<path d="M3 28 30 5" stroke="#666600"/>`,
  `<path d="M3 28 30 5" stroke="#663399"/>`];
$('cables').innerHTML = cables.map(c => `<div class="w-[35px] h-[34px] rounded-[5px] border border-[#b4b4b4] bg-[#e3e3e3]"><svg class="w-[33px] h-8" fill="none" stroke-width="2.200">${c}</svg></div>`).join('');

$('thead').innerHTML = ['Fire','Last Status','Source','Destination','Type','Color','Time(sec)','Periodic','Num','Edit','Delete']
  .map(t => `<div class="border-r border-[#dedede] pl-[5px] pt-[6px] whitespace-nowrap">${t}</div>`).join('');
$('rows').innerHTML = [['PC0','PC1','#660a36'],['PC4','PC5','#6d506f'],['PC8','PC9','#0cf63c'],['PC10','PC11','#7039dd']].map(([s, d, c], i) =>
  `<div class="h-6 grid grid-cols-[45px_79px_56px_80px_45px_45px_72px_62px_45px_45px_351px] text-center leading-[18px] tracking-[-0.1px] whitespace-nowrap">
    <div class="pl-[26px]"><svg class="w-[19px] h-6 ${i ? '' : 'bg-[#d9d9d9]'}"><ellipse cx="11" cy="13" rx="9" ry="6" fill="${i ? '#000' : '#0d2340'}"/><path d="M5 9v4q6 5 13 0V9Z" fill="${i ? '#a00000' : '#7a1c3a'}"/><ellipse cx="11.500" cy="9.500" rx="6" ry="3.800" fill="${i ? '#f00000' : '#a72c46'}"/></svg></div>
    <div>Successful</div><div>${s}</div><div>${d}</div><div>ICMP</div>
    <div class="pl-[3px] pt-[5px]"><div class="w-[15px] h-[15px]" style="background:${c}"></div></div>
    <div>0.000</div><div>N</div><div>${i}</div><div>(edit)</div><div>(delete)</div></div>`).join('');
</script>
</body>
</html>
